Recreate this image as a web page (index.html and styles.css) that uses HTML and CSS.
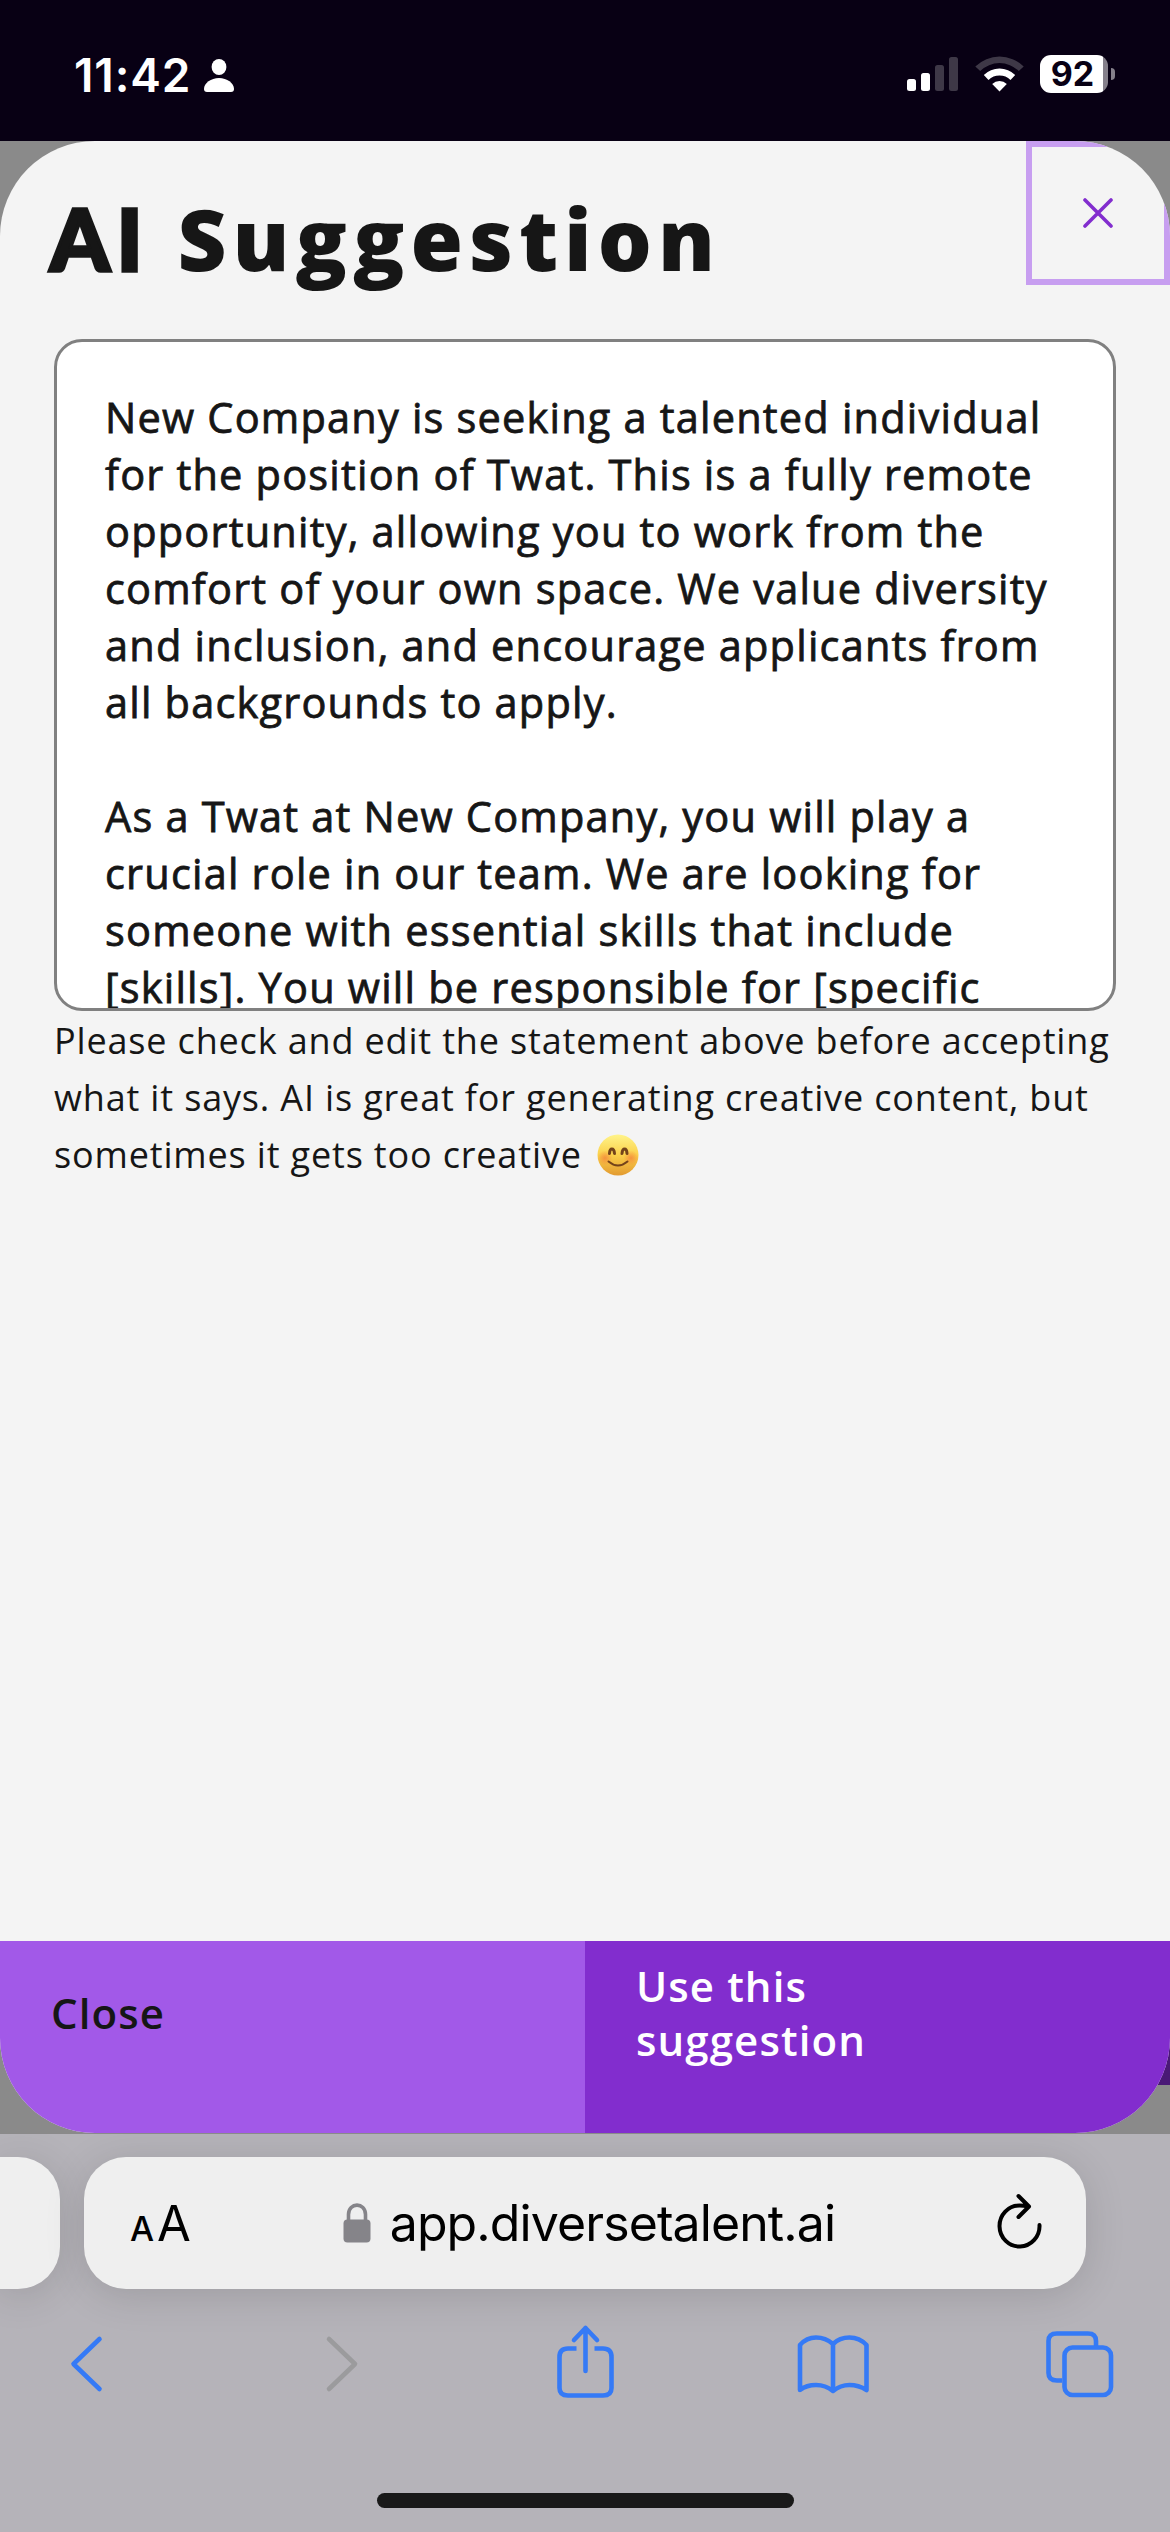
FILE: index.html
```html
<!DOCTYPE html>
<html lang="en">
<head>
  <meta charset="UTF-8" />
  <meta name="viewport" content="width=device-width, initial-scale=1.0"/>
  <title>AI Suggestion</title>
  <link rel="stylesheet" href="styles.css">
</head>
<body>

  <div class="status-bar">
    <div class="clock">
      <span class="time">11:42</span>
      <svg width="30" height="33" viewBox="0 0 30 33" fill="#fff">
        <ellipse cx="15" cy="8" rx="7.4" ry="8"/>
        <path d="M3 33Q0 33 0 30C0 24 7 19 15 19S30 24 30 30Q30 33 27 33Z"/>
      </svg>
    </div>
    <div class="indicators">
      <svg width="52" height="38" viewBox="0 0 52 38" fill="#fff">
        <rect x="0" y="24" width="9" height="12" rx="2.5"/>
        <rect x="14" y="18" width="9" height="18" rx="2.5"/>
        <rect x="28" y="10" width="9" height="26" rx="2.5" opacity=".22"/>
        <rect x="42" y="2" width="9" height="34" rx="2.5" opacity=".22"/>
      </svg>
      <svg width="49" height="38" viewBox="0 0 49 38" fill="#fff">
        <path d="M0.3 11.5A34.5 34.5 0 0 1 48.7 11.5L43.8 16A27.5 27.5 0 0 0 5.2 16Z" opacity=".22"/>
        <path d="M8.8 20A22.5 22.5 0 0 1 40.2 20L35.5 25A15.8 15.8 0 0 0 13.5 25Z"/>
        <path d="M17.2 29A10.5 10.5 0 0 1 31.8 29L24.5 36.5Z"/>
      </svg>
      <div class="battery"><span>92</span></div>
    </div>
  </div>

  <div class="page">
    <div class="behind"></div>
    <div class="modal">
      <div class="modal-header">
        <h1><span class="ai">AI</span> Suggestion</h1>
        <button class="close-x" aria-label="Close">
          <svg width="30" height="30" viewBox="0 0 30 30" fill="none" stroke="#822dce" stroke-width="3.6" stroke-linecap="round">
            <path d="M2 2L28 28M28 2L2 28"/>
          </svg>
        </button>
      </div>

      <div class="modal-body">
        <div class="statement">
          New Company is seeking a talented individual<br>
          for the position of Twat. This is a fully remote<br>
          opportunity, allowing you to work from the<br>
          comfort of your own space. We value diversity<br>
          and inclusion, and encourage applicants from<br>
          all backgrounds to apply.<br>
          <br>
          As a Twat at New Company, you will play a<br>
          crucial role in our team. We are looking for<br>
          someone with essential skills that include<br>
          [skills]. You will be responsible for [specific
        </div>
        <p class="hint">
          Please check and edit the statement above before accepting<br>
          what it says. AI is great for generating creative content, but<br>
          sometimes it gets too creative
          <svg class="smile" width="42" height="42" viewBox="0 0 42 42">
            <defs>
              <linearGradient id="face" x1="0" y1="0" x2="0" y2="1">
                <stop offset="0" stop-color="#fff48a"/>
                <stop offset=".5" stop-color="#fbd04a"/>
                <stop offset="1" stop-color="#e29a30"/>
              </linearGradient>
              <radialGradient id="cheek">
                <stop offset="0" stop-color="#f58a3c" stop-opacity=".85"/>
                <stop offset="1" stop-color="#f58a3c" stop-opacity="0"/>
              </radialGradient>
            </defs>
            <circle cx="21" cy="21" r="20.5" fill="url(#face)"/>
            <circle cx="8" cy="24" r="7.5" fill="url(#cheek)"/>
            <circle cx="34" cy="24" r="7.5" fill="url(#cheek)"/>
            <g fill="none" stroke="#74431a" stroke-linecap="round">
              <path d="M12.500 19.500C12.800 13.500 17 13.500 17.500 19.500M25 19.500C25.500 13.500 29.700 13.500 30 19.500" stroke-width="3"/>
              <path d="M11.500 27.500Q21 35.500 30.500 27.500" stroke-width="2"/>
            </g>
          </svg>
        </p>
      </div>

      <div class="modal-actions">
        <button class="btn btn-close">Close</button>
        <button class="btn btn-use">Use this<br>suggestion</button>
      </div>
    </div>
  </div>

  <div class="browser-bar">
    <div class="tabs-row">
      <div class="prev-tab"></div>
      <div class="address">
        <div class="text-size"><span>A</span><span>A</span></div>
        <div class="url">
          <svg width="28" height="40" viewBox="0 0 28 40">
            <path d="M5.500 18V11.500C5.500 -1 22.500 -1 22.500 11.500V18" fill="none" stroke="#858489" stroke-width="3.600"/>
            <rect x="0.500" y="16.500" width="27" height="23" rx="4" fill="#858489"/>
          </svg>
          <span>app.diversetalent.ai</span>
        </div>
        <svg class="reload" width="46" height="56" viewBox="0 0 46 56" fill="none" stroke="#000" stroke-width="4" stroke-linecap="round" stroke-linejoin="round">
          <path d="M42.500 32A20 20.500 0 1 1 22.500 12.500Q27 12.500 31 13.500M21.500 3L32 13.500L21.500 24"/>
        </svg>
      </div>
    </div>

    <div class="toolbar">
      <svg width="80" height="80" viewBox="46 2324 80 80"><path d="M99.500 2339L73.500 2364L99.500 2389"/></svg>
      <svg class="disabled" width="80" height="80" viewBox="294.500 2324 80 80"><path d="M328.500 2339L354.500 2364L328.500 2389"/></svg>
      <svg width="80" height="80" viewBox="543 2324 80 80">
        <path d="M576.500 2348.500H568Q559.500 2348.500 559.500 2357V2388Q559.500 2395.500 568 2395.500H603Q611.500 2395.500 611.500 2388V2357Q611.500 2348.500 603 2348.500H594.500" stroke-linecap="butt"/>
        <path d="M585.500 2371V2328M574 2340L585.500 2328L597 2340"/>
      </svg>
      <svg width="80" height="80" viewBox="791.500 2324 80 80">
        <path d="M832.500 2391V2344Q825 2337.500 815.500 2337.500T799.500 2345V2390Q806 2385 815.500 2385T832.500 2391Q840 2385 849 2385T866 2390V2345Q859 2337.500 849 2337.500T832.500 2344"/>
      </svg>
      <svg width="80" height="80" viewBox="1040 2324 80 80">
        <path d="M1062 2380.500H1057Q1048.500 2380.500 1048.500 2373V2341Q1048.500 2333.500 1057 2333.500H1088Q1096 2333.500 1096 2341V2346" stroke-linecap="butt"/>
        <rect x="1064.500" y="2347.500" width="46.500" height="47.500" rx="8"/>
      </svg>
    </div>
    <div class="home-indicator"></div>
  </div>

</body>
</html>
```
FILE: styles.css
```css
* {
  box-sizing: border-box;
}

body {
  margin: 0;
  width: 1170px;
  height: 2532px;
  overflow: hidden;
  display: flex;
  flex-direction: column;
  font-family: 'Open Sans', sans-serif;
  color: #161616;
}

svg {
  display: block;
  flex: none;
}

button {
  border: none;
  font-family: inherit;
  text-align: left;
}

/* status bar */
.status-bar {
  height: 141px;
  flex: none;
  padding: 55px 55px 0 74px;
  display: flex;
  justify-content: space-between;
  align-items: flex-start;
  background: #080014;
  color: #fff;
  font-family: Inter, sans-serif;
  font-weight: 600;
}

.clock {
  display: flex;
  align-items: center;
  gap: 15px;
  height: 40px;
}

.time {
  width: 115px;
  font-size: 46px;
  letter-spacing: 0.9px;
  white-space: nowrap;
}

.indicators {
  display: flex;
}

.indicators svg {
  margin-right: 16px;
}

.battery {
  position: relative;
  width: 68px;
  height: 38px;
  margin-right: 7px;
  padding-right: 3px;
  border-radius: 11px;
  background: linear-gradient(90deg, #fff 63px, #85808b 63px);
  color: #080014;
  font-size: 34px;
  font-weight: 700;
  line-height: 38px;
  text-align: center;
}

.battery::after {
  content: "";
  position: absolute;
  left: 71px;
  top: 13px;
  width: 4px;
  height: 12px;
  border-radius: 0 5px 5px 0;
  background: #85808b;
}

/* modal */
.page {
  position: relative;
  height: 1993px;
  flex: none;
  background: #8a8a8a;
}

.behind {
  position: absolute;
  right: 0;
  bottom: 49px;
  width: 12px;
  height: 60px;
  background: #4a1976;
}

.modal {
  position: relative;
  height: 1992px;
  border-radius: 95px;
  overflow: hidden;
  display: flex;
  flex-direction: column;
  background: #f4f4f4;
}

.modal-header {
  height: 198px;
  flex: none;
  display: flex;
  justify-content: space-between;
  align-items: flex-start;
}

h1 {
  margin: 37px 0 0 50px;
  font-size: 85px;
  font-weight: 800;
  line-height: 120px;
  letter-spacing: 6px;
  white-space: nowrap;
}

.ai {
  font-family: Lato, sans-serif;
  font-weight: 900;
  letter-spacing: 7px;
  -webkit-text-stroke: 3.5px #161616;
}

.close-x {
  width: 144px;
  height: 144px;
  padding: 0;
  border: 6px solid #c79ef0;
  background: none;
  display: flex;
  align-items: center;
  justify-content: center;
}

.modal-body {
  flex: 1;
  padding: 0 54px;
}

.statement {
  height: 672px;
  padding: 47px 48px 0;
  border: 3px solid #808080;
  border-radius: 28px;
  overflow: hidden;
  background: #fff;
  font-size: 41.5px;
  line-height: 57px;
  letter-spacing: 1.2px;
  white-space: nowrap;
  -webkit-text-stroke: 0.8px #161616;
}

.hint {
  margin: 1px 0 0;
  font-size: 36px;
  line-height: 57px;
  letter-spacing: 0.84px;
  white-space: nowrap;
}

.smile {
  display: inline-block;
  margin-left: 5px;
  vertical-align: -8px;
}

.modal-actions {
  height: 192px;
  flex: none;
  display: flex;
}

.btn {
  width: 50%;
  padding: 0 51px 48px;
  font-size: 42px;
  font-weight: 600;
  line-height: 54px;
  letter-spacing: 1.1px;
}

.btn-close {
  background: #a259e8;
  color: #161616;
}

.btn-use {
  background: #822dce;
  color: #fff;
}

/* browser chrome */
.browser-bar {
  flex: 1;
  padding-top: 23px;
  background: #b5b3b9;
  font-family: Inter, sans-serif;
  color: #000;
}

.tabs-row {
  display: flex;
  gap: 24px;
}

.prev-tab {
  width: 60px;
  height: 132px;
  border-radius: 0 42px 42px 0;
  background: #efefef;
  box-shadow: 0 6px 40px rgba(0, 0, 0, 0.13);
}

.address {
  width: 1002px;
  height: 132px;
  padding: 0 43px 0 46px;
  border-radius: 42px;
  display: flex;
  align-items: center;
  justify-content: space-between;
  background: #efefef;
  box-shadow: 0 6px 40px rgba(0, 0, 0, 0.13);
}

.text-size {
  display: flex;
  align-items: baseline;
  gap: 3px;
  font-size: 49px;
}

.text-size span:first-child {
  font-size: 34px;
  font-weight: 500;
}

.url {
  margin-right: 10px;
  display: flex;
  align-items: center;
  gap: 19px;
  font-size: 50px;
  letter-spacing: -0.9px;
  white-space: nowrap;
}

.reload {
  margin-bottom: 4px;
}

.toolbar {
  margin-top: 35px;
  padding: 0 50px 0 46px;
  display: flex;
  justify-content: space-between;
}

.toolbar svg {
  fill: none;
  stroke: #357af6;
  stroke-width: 4.6;
  stroke-linecap: round;
  stroke-linejoin: round;
}

.toolbar .disabled {
  stroke: #9b9b9d;
}

.home-indicator {
  width: 417px;
  height: 15px;
  margin: 89px auto 0;
  border-radius: 8px;
  background: #191919;
}
```
